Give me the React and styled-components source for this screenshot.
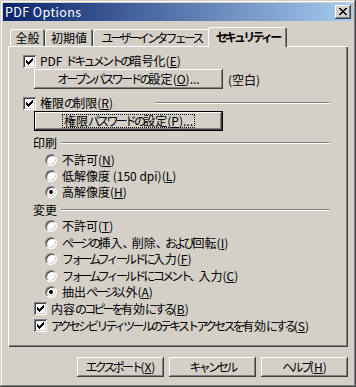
import React from 'react';
import styled, { createGlobalStyle } from 'styled-components';

const FACE = '#d4d0c8';
const FONT = `"Noto Sans CJK JP", "Noto Sans", sans-serif`;

const Global = createGlobalStyle`
  html, body { margin: 0; padding: 0; background: ${FACE}; }
  body {
    font-family: ${FONT};
    font-size: 12px;
    color: #000;
  }
  * { box-sizing: border-box; }
`;

const Window = styled.div`
  width: 356px;
  height: 387px;
  background: ${FACE};
  box-shadow: inset -1px -1px #404040, inset 1px 1px ${FACE},
    inset -2px -2px #808080, inset 2px 2px #fff;
  padding: 3px;
  display: flex;
  flex-direction: column;
`;

const TitleBar = styled.div`
  height: 18px;
  flex: none;
  background: linear-gradient(to right, #0a246a, #a6caf0);
  display: flex;
  align-items: center;
  justify-content: space-between;
  padding: 0 2px;
  color: #fff;
`;

const TitleText = styled.span`
  font-size: 12.5px;
  line-height: 18px;
  letter-spacing: 0.4px;
`;

const CloseBtn = styled.div`
  width: 16px;
  height: 14px;
  background: ${FACE};
  box-shadow: inset -1px -1px #404040, inset 1px 1px #fff,
    inset -2px -2px #808080, inset 2px 2px ${FACE};
  display: flex;
  align-items: center;
  justify-content: center;
  padding: 0 1px 1px 0;
`;

const Body = styled.div`
  flex: 1;
  display: flex;
  flex-direction: column;
  padding: 6px 5px 0 5px;
`;

const TabStrip = styled.div`
  height: 19px;
  display: flex;
  align-items: flex-end;
  padding-left: 2px;
  position: relative;
  z-index: 1;
`;

const Tab = styled.div`
  width: ${(p) => p.$w}px;
  height: ${(p) => (p.$active ? 20 : 17)}px;
  margin: 0 ${(p) => (p.$active ? -2 : 0)}px ${(p) => (p.$active ? -1 : 0)}px;
  background: ${FACE};
  border-radius: 3px 3px 0 0;
  box-shadow: inset 1px 1px #fff, inset -1px 0 #404040, inset -2px 0 #808080;
  display: flex;
  align-items: ${(p) => (p.$active ? 'flex-start' : 'center')};
  padding-top: ${(p) => (p.$active ? 1 : 0)}px;
  justify-content: center;
  font-weight: ${(p) => (p.$active ? 700 : 400)};
  line-height: 17px;
  white-space: nowrap;
`;

const Panel = styled.div`
  height: 301px;
  background: ${FACE};
  box-shadow: inset 1px 1px #fff, inset -1px -1px #404040, inset -2px -2px #808080;
  display: flex;
  flex-direction: column;
  padding-top: 7px;
`;

const Row = styled.div`
  height: ${(p) => p.$h || 16}px;
  margin-top: ${(p) => p.$mt || 0}px;
  padding-left: ${(p) => p.$indent || 0}px;
  padding-right: 18px;
  display: flex;
  align-items: center;
  white-space: nowrap;
  line-height: 16px;
`;

const BoxWrap = styled.span`
  width: 13px;
  height: 13px;
  flex: none;
  background: #fff;
  box-shadow: inset 1px 1px #808080, inset -1px -1px #fff,
    inset 2px 2px #404040, inset -2px -2px ${FACE};
  display: flex;
  align-items: center;
  justify-content: center;
  margin-right: 4px;
`;

const RadioCircle = styled.span`
  width: 12px;
  height: 12px;
  flex: none;
  border-radius: 50%;
  background: #fff;
  border: 1px solid;
  border-color: #808080 #fff #fff #808080;
  box-shadow: inset 1px 1px #404040, inset -1px -1px ${FACE};
  display: flex;
  align-items: center;
  justify-content: center;
  margin-right: 5px;
`;

const Dot = styled.span`
  width: 4px;
  height: 4px;
  border-radius: 50%;
  background: #000;
`;

const Label = styled.span`
  width: ${(p) => (p.$w ? `${p.$w}px` : 'auto')};
  flex: none;
`;

const Kana = styled.span`
  letter-spacing: -2.8px;
`;

const Etched = styled.span`
  flex: 1;
  height: 2px;
  border-top: 1px solid #808080;
  border-bottom: 1px solid #fff;
  margin-left: ${(p) => p.$ml || 0}px;
  margin-bottom: 1px;
`;

const Button = styled.div`
  width: ${(p) => p.$w}px;
  height: 20px;
  flex: none;
  background: ${FACE};
  display: flex;
  align-items: center;
  justify-content: center;
  white-space: nowrap;
  line-height: 14px;
  box-shadow: ${(p) =>
    p.$default
      ? `inset 0 0 0 1px #000, inset -2px -2px #404040, inset 2px 2px #fff, inset -3px -3px #808080`
      : `inset -1px -1px #404040, inset 1px 1px #fff, inset -2px -2px #808080, inset 2px 2px ${FACE}`};
`;

const Focus = styled.span`
  outline: 1px dotted #000;
  padding: 0 1px;
  line-height: 12px;
  display: inline-block;
`;

const ButtonRow = styled.div`
  display: flex;
  align-items: center;
  margin-left: ${(p) => p.$indent}px;
  gap: 5px;
  white-space: nowrap;
`;

const Footer = styled.div`
  margin-top: 10px;
  display: flex;
  justify-content: flex-end;
  gap: 5px;
`;

const KANA = /([\u3000-\u30ff]+)/;
const T = ({ children }) =>
  React.Children.map(children, (c) =>
    typeof c === 'string'
      ? c.split(KANA).map((s, i) => (KANA.test(s) ? <Kana key={i}>{s}</Kana> : s))
      : c
  );

const Check = () => (
  <svg width="7" height="7" viewBox="0 0 7 7" shapeRendering="crispEdges">
    <path
      fill="#000"
      d="M6 0h1v1h-1z M5 1h2v1h-2z M0 2h1v1h-1z M4 2h3v1h-3z M0 3h2v1h-2z M3 3h3v1h-3z M0 4h5v1h-5z M1 5h3v1h-3z M2 6h1v1h-1z"
    />
  </svg>
);

const CloseGlyph = () => (
  <svg width="8" height="7" viewBox="0 0 8 7" shapeRendering="crispEdges">
    <path
      fill="#000"
      d="M0 0h2v1h-2z M6 0h2v1h-2z M1 1h2v1h-2z M5 1h2v1h-2z M2 2h4v1h-4z M3 3h2v1h-2z M2 4h4v1h-4z M1 5h2v1h-2z M5 5h2v1h-2z M0 6h2v1h-2z M6 6h2v1h-2z"
    />
  </svg>
);

const CheckRow = ({ indent, h, mt, labelW, children, line }) => (
  <Row $indent={indent} $h={h} $mt={mt}>
    <BoxWrap>
      <Check />
    </BoxWrap>
    <Label $w={labelW}>
      <T>{children}</T>
    </Label>
    {line && <Etched />}
  </Row>
);

const RadioRow = ({ h, mt, checked, children }) => (
  <Row $indent={37} $h={h} $mt={mt}>
    <RadioCircle>{checked && <Dot />}</RadioCircle>
    <Label>
      <T>{children}</T>
    </Label>
  </Row>
);

const GroupRow = ({ mt, children }) => (
  <Row $indent={25} $mt={mt}>
    <Label>{children}</Label>
    <Etched $ml={4} />
  </Row>
);

export default function App() {
  return (
    <>
      <Global />
      <Window>
        <TitleBar>
          <TitleText>PDF Options</TitleText>
          <CloseBtn>
            <CloseGlyph />
          </CloseBtn>
        </TitleBar>
        <Body>
          <TabStrip>
            <Tab $w={35}>全般</Tab>
            <Tab $w={48}>初期値</Tab>
            <Tab $w={117}>
              <T>ユーザーインタフェース</T>
            </Tab>
            <Tab $w={79} $active>
              <T>セキュリティー</T>
            </Tab>
          </TabStrip>
          <Panel>
            <CheckRow indent={15}>
              PDF ドキュメントの暗号化(<u>E</u>)
            </CheckRow>
            <ButtonRow $indent={26}>
              <Button $w={189}>
                <T>オープンパスワードの設定</T>(<u>O</u>)...
              </Button>
              <span>(空白)</span>
            </ButtonRow>
            <CheckRow indent={15} mt={6} labelW={115} line>
              権限の制限(<u>R</u>)
            </CheckRow>
            <ButtonRow $indent={26}>
              <Button $w={189} $default>
                <Focus>
                  <T>権限パスワードの設定</T>(<u>P</u>)...
                </Focus>
              </Button>
            </ButtonRow>
            <GroupRow mt={4}>印刷</GroupRow>
            <RadioRow mt={1}>
              不許可(<u>N</u>)
            </RadioRow>
            <RadioRow>
              低解像度 (150 dpi)(<u>L</u>)
            </RadioRow>
            <RadioRow checked>
              高解像度(<u>H</u>)
            </RadioRow>
            <GroupRow mt={2}>変更</GroupRow>
            <RadioRow h={16}>
              不許可(<u>T</u>)
            </RadioRow>
            <RadioRow h={17}>
              ページの挿入、削除、および回転(<u>I</u>)
            </RadioRow>
            <RadioRow h={16}>
              フォームフィールドに入力(<u>F</u>)
            </RadioRow>
            <RadioRow h={17}>
              フォームフィールドにコメント、入力(<u>C</u>)
            </RadioRow>
            <RadioRow h={16} checked>
              抽出ページ以外(<u>A</u>)
            </RadioRow>
            <CheckRow indent={26} h={17}>
              内容のコピーを有効にする(<u>B</u>)
            </CheckRow>
            <CheckRow indent={26} h={17}>
              アクセシビリティツールのテキストアクセスを有効にする(<u>S</u>)
            </CheckRow>
          </Panel>
          <Footer>
            <Button $w={87}>
              <T>エクスポート</T>(<u>X</u>)
            </Button>
            <Button $w={87}>
              <T>キャンセル</T>
            </Button>
            <Button $w={87}>
              <T>ヘルプ</T>(<u>H</u>)
            </Button>
          </Footer>
        </Body>
      </Window>
    </>
  );
}
